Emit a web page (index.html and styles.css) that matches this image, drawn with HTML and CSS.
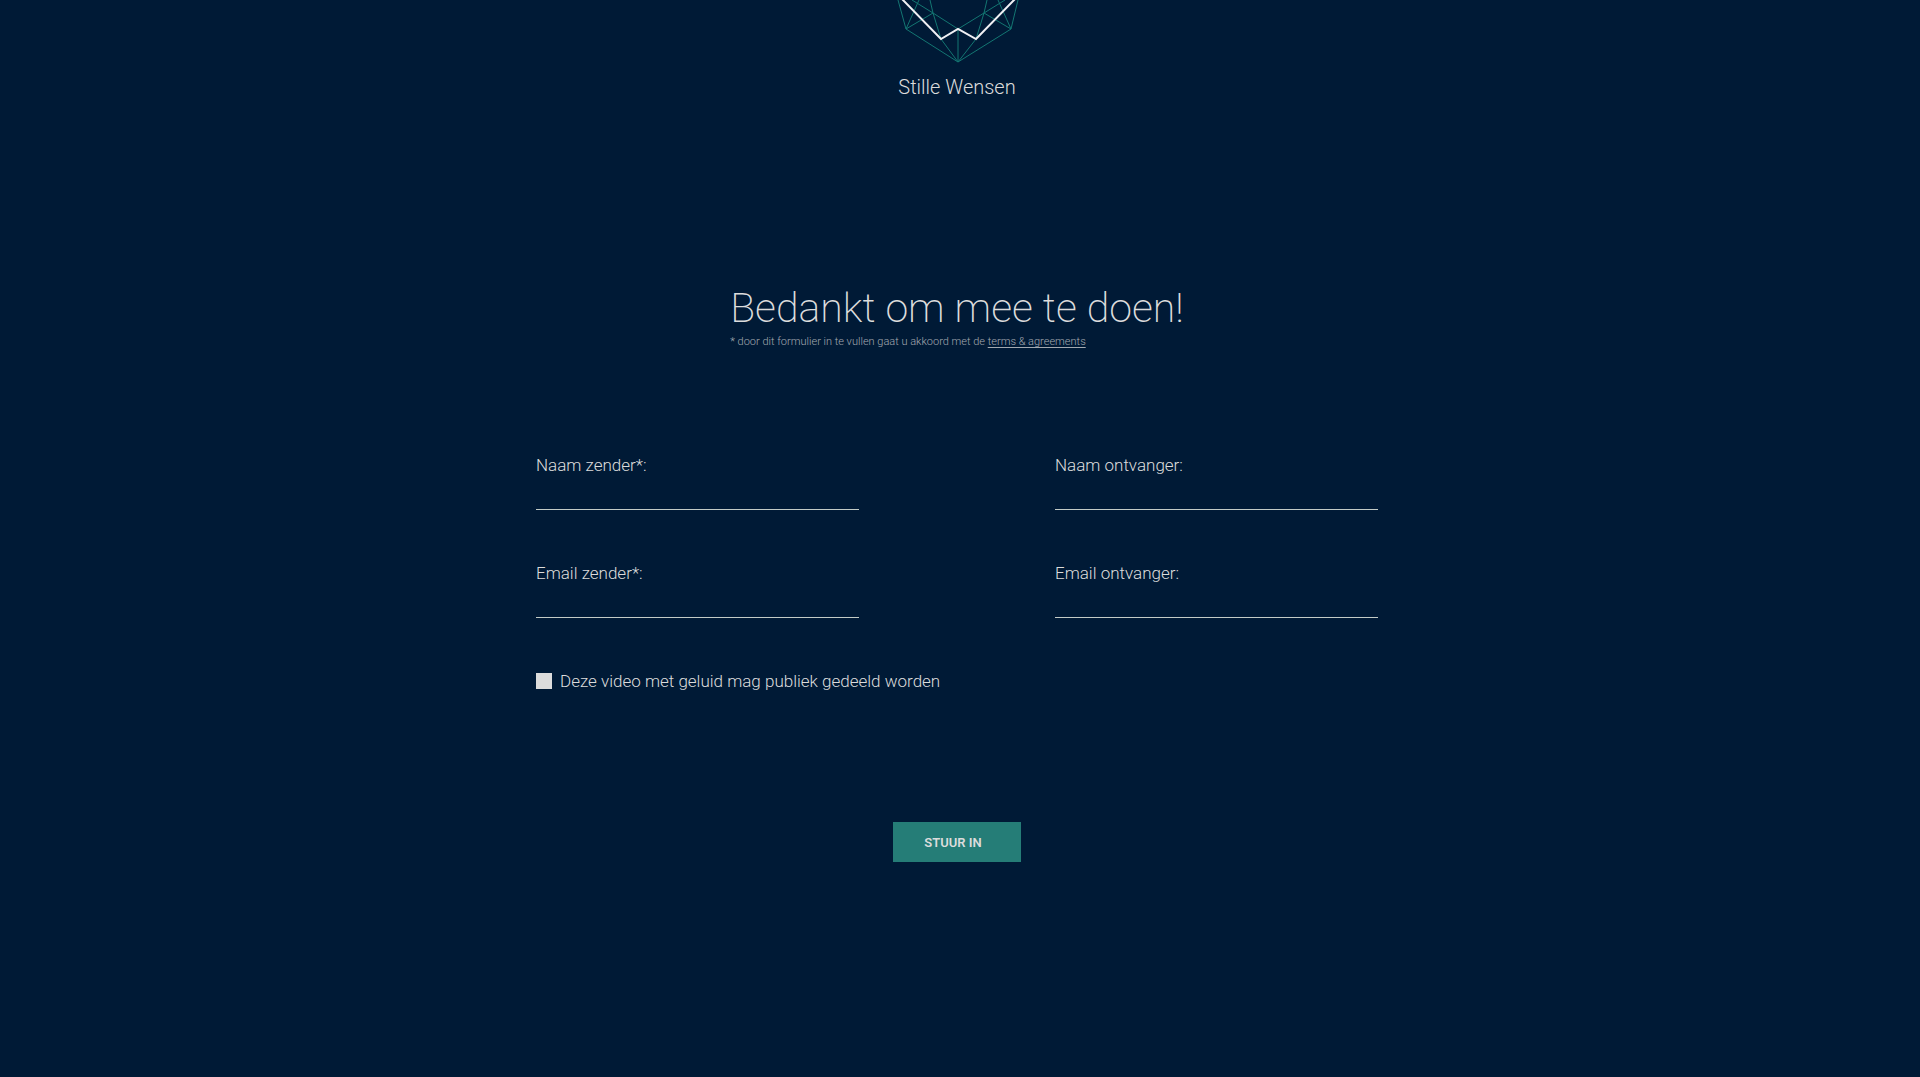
FILE: index.html
```html
<!DOCTYPE html>
<html lang="nl">
<head>
<meta charset="utf-8">
<title>Stille Wensen</title>
<link rel="stylesheet" href="styles.css">
</head>
<body>
<header class="brand">
  <svg class="brand-logo" viewBox="-2 0 126 64" aria-hidden="true">
    <path class="facets" d="M2 0 10 29 62 62 115 29 122 0M10 29 23 0M115 29 102 0M10 29 37 13 62 29 88 13 115 29M37 13 16 0M88 13 109 0M37 13 34 0M88 13 91 0M37 13 45 39 62 62 80 39 88 13M62 29V62"/>
    <path class="mark" d="M5 -2 45 39 62 29 80 39 120 -2"/>
  </svg>
  <p class="brand-name">Stille Wensen</p>
</header>
<main class="page">
  <div class="intro">
    <h1 class="title">Bedankt om mee te doen!</h1>
    <p class="note">* door dit formulier in te vullen gaat u akkoord met de <a class="terms" href="#">terms &amp; agreements</a></p>
  </div>
  <form class="form">
    <div class="fields">
      <div class="field"><label for="sender-name">Naam zender*:</label><input id="sender-name" type="text" required></div>
      <div class="field"><label for="receiver-name">Naam ontvanger:</label><input id="receiver-name" type="text"></div>
      <div class="field"><label for="sender-email">Email zender*:</label><input id="sender-email" type="email" required></div>
      <div class="field"><label for="receiver-email">Email ontvanger:</label><input id="receiver-email" type="email"></div>
    </div>
    <div class="consent"><input id="public" type="checkbox"><label for="public">Deze video met geluid mag publiek gedeeld worden</label></div>
    <button class="submit" type="submit">STUUR IN</button>
  </form>
</main>
</body>
</html>
```

FILE: styles.css
```css
* { box-sizing: border-box; }
body {
  margin: 0;
  padding: 0 6px 40px 0;
  background: #001a36;
  color: #dcdcdc;
  font-family: Roboto, sans-serif;
  font-weight: 300;
  font-size: 17px;
  line-height: 24px;
}
h1, p { margin: 0; }
.brand { display: flex; flex-direction: column; align-items: center; }
.brand-logo { display: block; width: 126px; height: 64px; }
.brand-logo path { fill: none; }
.facets { stroke: #137672; stroke-width: 1; }
.brand-logo .mark { stroke: #f0f0f4; stroke-width: 2; }
.brand-name { margin-top: 7px; font-size: 20px; line-height: 32px; }
.page { display: flex; flex-direction: column; align-items: center; padding: 179px 24px 0; }
.title { font-size: 41px; line-height: 52px; font-weight: 200; }
.note { font-size: 11px; line-height: 16px; color: #a3a9b0; }
.terms { color: inherit; text-underline-offset: 2px; }
.form { display: flex; flex-direction: column; width: 100%; max-width: 842px; margin-top: 103px; }
.fields { display: grid; grid-template-columns: repeat(auto-fit, minmax(280px, 323px)); justify-content: space-between; row-gap: 51px; }
.field { display: flex; flex-direction: column; }
.field input {
  height: 33px;
  padding: 4px 0;
  border: 0;
  border-bottom: 1px solid #c3cbc6;
  background: transparent;
  color: inherit;
  font: inherit;
}
.consent { display: flex; align-items: center; gap: 8px; margin-top: 51px; }
.consent input { appearance: none; width: 16px; height: 16px; margin: 0; background: #dcdcdc; }
.consent input:checked { background: #257d77; border: 3px solid #dcdcdc; }
.submit {
  align-self: center;
  width: 128px;
  height: 40px;
  margin-top: 129px;
  padding: 2px 8px 0 0;
  border: 0;
  background: #257d77;
  color: #dcdcdc;
  font: 600 13px/16px Roboto, sans-serif;
}
```
